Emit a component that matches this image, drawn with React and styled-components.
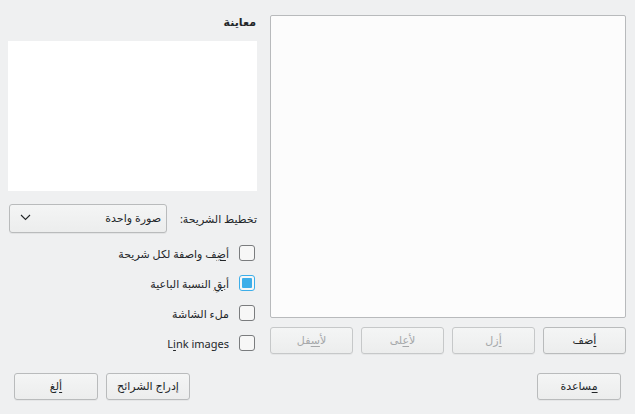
import React from "react";
import styled, { createGlobalStyle } from "styled-components";

const GlobalStyle = createGlobalStyle`
  html, body { margin: 0; padding: 0; background: #eff0f1; }
  body {
    font-family: "Noto Sans", "DejaVu Sans", sans-serif;
    font-size: 11px;
    color: #232629;
  }
  * { box-sizing: border-box; }
`;

const Dialog = styled.div`
  width: 635px;
  height: 414px;
  display: flex;
  flex-direction: column;
  background: #eff0f1;
  direction: rtl;
`;

const Main = styled.div`
  display: flex;
  flex-direction: row;
  gap: 13px;
  padding: 15px 9px 0 8px;
`;

const ListColumn = styled.div`
  width: 356px;
  display: flex;
  flex-direction: column;
  gap: 9px;
`;

const ListBox = styled.div`
  height: 303px;
  background: #fcfcfc;
  border: 1px solid #b8babc;
  border-radius: 2px;
`;

const ButtonRow = styled.div`
  display: flex;
  gap: 8px;
`;

const Button = styled.button`
  width: ${(p) => p.$w || 83}px;
  height: 27px;
  font-family: inherit;
  font-size: 11px;
  white-space: nowrap;
  color: ${(p) => (p.disabled ? "#a6a8aa" : "#232629")};
  background: linear-gradient(#f4f5f5, #eceded);
  border: 1px solid ${(p) => (p.disabled ? "#c6c8c9" : "#b9bbbc")};
  border-radius: 3px;
  box-shadow: 0 1px 0 rgba(0, 0, 0, 0.04);
  padding: 0 4px 2px;
  direction: rtl;
  u { text-decoration-thickness: 1px; text-underline-offset: 2px; }
`;

const SideColumn = styled.div`
  width: 249px;
  display: flex;
  flex-direction: column;
`;

const PreviewLabel = styled.div`
  font-weight: bold;
  height: 18px;
  line-height: 14px;
  padding-right: 1px;
  margin-bottom: 8px;
`;

const PreviewBox = styled.div`
  height: 150px;
  background: #ffffff;
`;

const FormRow = styled.div`
  display: flex;
  align-items: center;
  justify-content: space-between;
  margin-top: 13px;
  height: 29px;
`;

const FieldLabel = styled.span`
  white-space: nowrap;
`;

const Combo = styled.div`
  width: 158px;
  height: 29px;
  margin-left: 1px;
  display: flex;
  align-items: center;
  justify-content: space-between;
  padding: 0 5px 2px 10px;
  background: linear-gradient(#f4f5f5, #eceded);
  border: 1px solid #b9bbbc;
  border-radius: 3px;
  box-shadow: 0 1px 0 rgba(0, 0, 0, 0.05);
`;

const CheckList = styled.div`
  display: flex;
  flex-direction: column;
  margin-top: 12px;
  gap: 14px;
  padding-right: 2px;
`;

const CheckRow = styled.label`
  display: flex;
  align-items: center;
  gap: 10px;
  height: 16px;
  white-space: nowrap;
  u { text-decoration-thickness: 1px; text-underline-offset: 2px; }
`;

const Box = styled.span`
  width: 16px;
  height: 16px;
  flex: none;
  border: 1px solid ${(p) => (p.$checked ? "#3daee9" : "#7a7c7e")};
  border-radius: 3px;
  background: #f7f7f7;
  display: flex;
  align-items: center;
  justify-content: center;
  &::after {
    content: "";
    display: ${(p) => (p.$checked ? "block" : "none")};
    width: 10px;
    height: 10px;
    background: #3daee9;
    border-radius: 1px;
  }
`;

const Latin = styled.span`
  direction: ltr;
  unicode-bidi: isolate;
`;

const Footer = styled.div`
  display: flex;
  justify-content: space-between;
  align-items: center;
  padding: 0 14px 0 14px;
  margin-top: 19px;
`;

const FooterGroup = styled.div`
  display: flex;
  gap: 8px;
`;

const Chevron = () => (
  <svg width="11" height="7" viewBox="0 0 11 7">
    <path d="M1 1 L5.5 5.5 L10 1" fill="none" stroke="#232629" strokeWidth="1.1" />
  </svg>
);

const checks = [
  { text: <><span>أ</span><u>ضِ</u><span>ف واصفة لكل شريحة</span></>, checked: false },
  { text: <><span>أب</span><u>قِ</u><span> النسبة الباعية</span></>, checked: true },
  { text: <>ملء الشاشة</>, checked: false },
  { text: <Latin>L<u>i</u>nk images</Latin>, checked: false },
];

export default function App() {
  return (
    <>
      <GlobalStyle />
      <Dialog>
        <Main>
          <ListColumn>
            <ListBox />
            <ButtonRow>
              <Button><u>أ</u>ضف</Button>
              <Button disabled><u>أ</u>زل</Button>
              <Button disabled>لأ<u>ع</u>لى</Button>
              <Button disabled>لأ<u>س</u>فل</Button>
            </ButtonRow>
          </ListColumn>
          <SideColumn>
            <PreviewLabel>معاينة</PreviewLabel>
            <PreviewBox />
            <FormRow>
              <FieldLabel>تخطيط الشريحة:</FieldLabel>
              <Combo>
                <span>صورة واحدة</span>
                <Chevron />
              </Combo>
            </FormRow>
            <CheckList>
              {checks.map((c, i) => (
                <CheckRow key={i}>
                  <Box $checked={c.checked} />
                  <span>{c.text}</span>
                </CheckRow>
              ))}
            </CheckList>
          </SideColumn>
        </Main>
        <Footer>
          <Button $w={84}><u>م</u>ساعدة</Button>
          <FooterGroup>
            <Button $w={84}>إدراج الشرائح</Button>
            <Button $w={84}><u>أ</u>لغ</Button>
          </FooterGroup>
        </Footer>
      </Dialog>
    </>
  );
}
